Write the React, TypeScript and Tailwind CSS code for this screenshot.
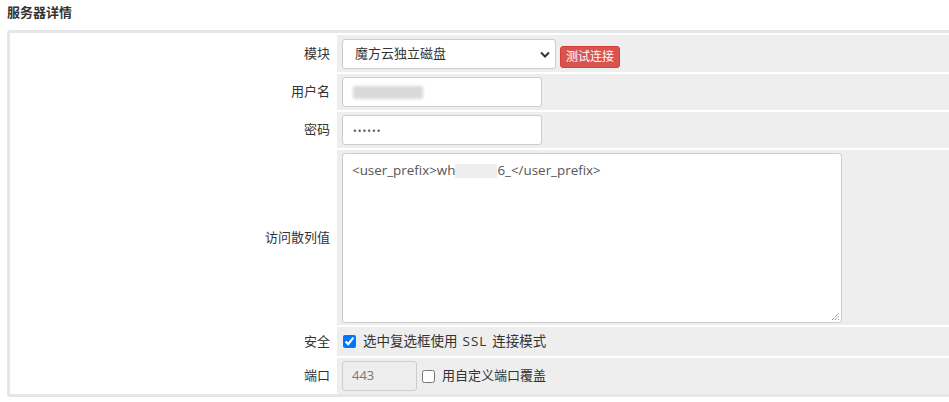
import React from "react";

const font = { fontFamily: '"Open Sans", "Noto Sans CJK SC", sans-serif' };

interface RowProps {
  label: string;
  className?: string;
  children: React.ReactNode;
}

const Row: React.FC<RowProps> = ({ label, className = "", children }) => (
  <div className={`flex ${className}`}>
    <div className="w-[327px] shrink-0 flex items-center justify-end pr-[7px] text-[13px] text-[#333]">
      {label}
    </div>
    <div className="flex-1 bg-[#eeeeee] flex items-center pl-[5px]">{children}</div>
  </div>
);

// redacted value, drawn as a faint smudge
const Smudge: React.FC<{ w: string }> = ({ w }) => (
  <span className={`inline-block ${w} h-[13px] bg-[#d9d9d9] blur-[1.5px] align-middle`} />
);

export default function App() {
  return (
    <div className="w-[949px] h-[402px] bg-white overflow-hidden" style={font}>
      <div className="pl-[7px] pt-[3px] h-[30px] text-[13px] font-bold text-[#333]">服务器详情</div>
      <div className="ml-[7px] w-[945px] border-[3px] border-[#e3e7e9] rounded-[3px] pt-[2px] flex flex-col gap-[2px]">
        <Row label="模块" className="h-[37px]">
          <div className="relative w-[214px] h-[30px] bg-white border border-[#ccc] rounded-[3px] flex items-center pl-[12px] text-[13px] text-[#333]">
            魔方云独立磁盘
            <svg className="absolute right-[5px] top-[11px]" width="10" height="7" viewBox="0 0 10 7">
              <path d="M1 1.5 L5 5.5 L9 1.5" fill="none" stroke="#333" strokeWidth="2" />
            </svg>
          </div>
          <button className="ml-[4px] mt-[7px] w-[60px] h-[22px] bg-[#d9534f] border border-[#d43f3a] rounded-[3px] text-white text-[12px] leading-none">
            测试连接
          </button>
        </Row>
        <Row label="用户名" className="h-[36px]">
          <div className="w-[200px] h-[30px] bg-white border border-[#ccc] rounded-[3px] flex items-center pl-[10px]">
            <Smudge w="w-[70px]" />
          </div>
        </Row>
        <Row label="密码" className="h-[36px]">
          <div className="w-[200px] h-[30px] bg-white border border-[#ccc] rounded-[3px] flex items-center pl-[10px] pt-[3px] text-[10px] tracking-[1px] text-[#555]">
            ••••••
          </div>
        </Row>
        <Row label="访问散列值" className="h-[175px]">
          <div className="relative w-[500px] h-[170px] bg-white border border-[#ccc] rounded-[3px] pl-[9px] pt-[6px] text-[13.4px] text-[#555]">
            &lt;user_prefix&gt;wh
            <span className="inline-block w-[42px] h-[14px] bg-[#eeeeee] align-middle" />
            6_&lt;/user_prefix&gt;
            <svg className="absolute right-[1px] bottom-[1px]" width="9" height="9" viewBox="0 0 9 9">
              <path d="M1 8 L8 1 M4 8 L8 4 M7 8 L8 7" stroke="#666" strokeWidth="1" strokeDasharray="1 1" />
            </svg>
          </div>
        </Row>
        <Row label="安全" className="h-[29px]">
          <input type="checkbox" defaultChecked className="w-[13px] h-[13px] ml-[1px] accent-[#0075ff]" />
          <span className="ml-[7px] text-[13.5px] text-[#333] whitespace-nowrap">
            选中复选框使用<span className="inline-block mx-[5px] tracking-[1px]">SSL</span>连接模式
          </span>
        </Row>
        <Row label="端口" className="h-[36px]">
          <div className="w-[75px] h-[30px] bg-[#eeeeee] border border-[#ccc] rounded-[3px] flex items-center pl-[9px] text-[13px] text-[#777]">
            443
          </div>
          <input type="checkbox" className="w-[13px] h-[13px] ml-[5px]" />
          <span className="ml-[7px] text-[13px] text-[#333]">用自定义端口覆盖</span>
        </Row>
      </div>
    </div>
  );
}
